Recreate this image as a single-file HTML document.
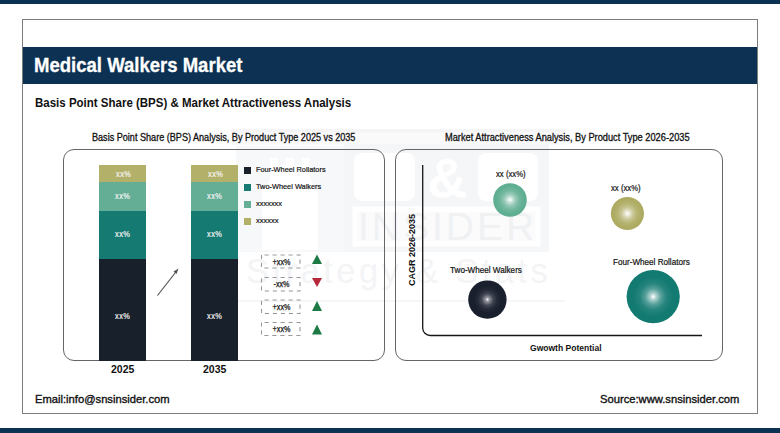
<!DOCTYPE html>
<html><head><meta charset="utf-8">
<style>
*{margin:0;padding:0;box-sizing:border-box}
html,body{width:780px;height:433px;overflow:hidden;background:#fff;font-family:"Liberation Sans",sans-serif;position:relative}
.a{position:absolute}
.t{position:absolute;white-space:nowrap;line-height:1;transform-origin:0 0}
#topbar{left:0;top:0;width:780px;height:4px;background:#0c3152}
#botbar{left:0;top:428px;width:780px;height:5px;background:#0c3152}
#frame{left:22px;top:19px;width:736px;height:395px;border:1px solid #7c7c7c}
#header{left:23px;top:47px;width:734px;height:37px;background:#0c3152}
.box{position:absolute;border:1.3px solid #666;border-radius:10px}
#lbox{left:63px;top:148.5px;width:322px;height:212.5px;border-radius:11px}
#rbox{left:395px;top:148.5px;width:328px;height:212.5px;border-radius:11px}
.seg{position:absolute;width:47px}
.bl{position:absolute;color:#f4f4f4;font-size:8.8px;letter-spacing:0.5px;text-indent:0.5px;-webkit-text-stroke:0.2px #f4f4f4;transform:scaleX(0.84);line-height:1;white-space:nowrap;text-align:center;width:47px}
.leg{position:absolute;width:7px;height:7px}
.lt{position:absolute;font-size:8.1px;color:#111;-webkit-text-stroke:0.2px #111;white-space:nowrap;line-height:1;transform-origin:0 0}
.db{position:absolute;width:39px;height:14px;border:1px dashed #9a9a9a}
.dbt{position:absolute;font-size:8.4px;color:#111;-webkit-text-stroke:0.25px #111;line-height:1;white-space:nowrap;width:39px;text-align:center;transform:scaleX(0.86)}
.bub{position:absolute;border-radius:50%}
</style></head><body>
<div id="topbar" class="a"></div>
<div id="botbar" class="a"></div>
<div id="frame" class="a"></div>
<div id="header" class="a"></div>
<!-- watermark -->
<svg class="a" style="left:0;top:0" width="780" height="433">
<rect x="231" y="129" width="334" height="16" fill="#fafafb"/><rect x="231" y="129" width="334" height="3.5" fill="#f5f5f7"/>
<rect x="236" y="146" width="108" height="106" fill="#f7f8f9"/>
<path d="M262 250 L262 190 L270 180 L270 158 L278 158 L278 165 L286 165 L286 158 L294 158 L294 165 L302 165 L302 158 L310 158 L310 180 L318 190 L318 250 Z" fill="#fff"/>
<rect x="344" y="144" width="205" height="108" fill="#f5f6f8"/>
<rect x="354" y="153" width="61" height="48" rx="8" fill="#fff"/>
<rect x="478" y="153" width="60" height="48" rx="8" fill="#fff"/>
<rect x="355" y="209" width="183" height="35" fill="#fbfbfc" stroke="#fff" stroke-width="5"/>
</svg>
<div class="t" style="left:427px;top:150px;font-size:56px;font-weight:bold;color:#fff">&amp;</div>
<div class="t" style="left:358px;top:207px;font-size:39px;color:#f0f1f3;letter-spacing:3px">INSIDER</div>
<div id="wm3" class="t" style="left:246px;top:254px;font-size:34.5px;color:#f3f4f6;letter-spacing:3.5px">Strategy &amp; Stats</div>
<svg class="a" style="left:0;top:0" width="780" height="433"><rect x="236" y="300" width="329" height="2" fill="#f5f6f8"/></svg>
<div id="title" class="t" style="left:34.2px;top:55.3px;font-size:20.6px;font-weight:bold;color:#fff;-webkit-text-stroke:0.3px #fff;transform:scaleX(0.9)">Medical Walkers Market</div>
<div id="sub" class="t" style="left:35px;top:97px;font-size:12.5px;font-weight:bold;color:#111;transform:scaleX(0.92)">Basis Point Share (BPS) &amp; Market Attractiveness Analysis</div>
<div id="lt" class="t" style="left:91.8px;top:133px;font-size:10.1px;color:#111;-webkit-text-stroke:0.3px #111;transform:scaleX(0.9)">Basis Point Share (BPS) Analysis, By Product Type 2025 vs 2035</div>
<div id="rt" class="t" style="left:444.8px;top:133px;font-size:10px;color:#111;-webkit-text-stroke:0.3px #111;transform:scaleX(0.925)">Market Attractiveness Analysis, By Product Type 2026-2035</div>

<div id="lbox" class="box"></div>
<div id="rbox" class="box"></div>

<!-- bars -->
<div class="seg" style="left:99px;top:165px;height:17px;background:#b3b069"></div>
<div class="seg" style="left:99px;top:182px;height:28.5px;background:#63ae94"></div>
<div class="seg" style="left:99px;top:210.5px;height:48px;background:#157a72"></div>
<div class="seg" style="left:99px;top:258.5px;height:102px;background:#18202c"></div>
<div class="seg" style="left:191px;top:165px;height:17px;background:#b3b069"></div>
<div class="seg" style="left:191px;top:182px;height:28.5px;background:#63ae94"></div>
<div class="seg" style="left:191px;top:210.5px;height:48px;background:#157a72"></div>
<div class="seg" style="left:191px;top:258.5px;height:102px;background:#18202c"></div>

<div class="bl" style="left:99.5px;top:169.5px">xx%</div>
<div class="bl" style="left:99px;top:192px">xx%</div>
<div class="bl" style="left:99px;top:230px">xx%</div>
<div class="bl" style="left:99px;top:312px">xx%</div>
<div class="bl" style="left:192px;top:169.5px">xx%</div>
<div class="bl" style="left:191px;top:192px">xx%</div>
<div class="bl" style="left:191px;top:230px">xx%</div>
<div class="bl" style="left:191px;top:312px">xx%</div>

<div id="y1" class="t" style="left:111px;top:364px;font-size:10.5px;font-weight:bold;color:#111">2025</div>
<div id="y2" class="t" style="left:203px;top:364px;font-size:10.5px;font-weight:bold;color:#111">2035</div>

<!-- arrow -->
<svg class="a" style="left:0;top:0" width="780" height="433">
<line x1="157.5" y1="295.5" x2="177" y2="270.5" stroke="#555" stroke-width="1.2"/>
<polygon points="178.5,268.5 173.5,271.5 176.5,274" fill="#555"/>
</svg>

<!-- legend -->
<div class="leg" style="left:244px;top:167px;background:#18202c"></div>
<div class="leg" style="left:244px;top:184px;background:#157a72"></div>
<div class="leg" style="left:244px;top:201px;background:#63ae94"></div>
<div class="leg" style="left:244px;top:218px;background:#b3b069"></div>
<div class="lt" style="left:256px;top:166px;transform:scaleX(0.91)">Four-Wheel Rollators</div>
<div class="lt" style="left:256px;top:183px;transform:scaleX(0.91)">Two-Wheel Walkers</div>
<div class="lt" style="left:256px;top:200px;transform:scaleX(0.92)">xxxxxxx</div>
<div class="lt" style="left:256px;top:217px;transform:scaleX(0.93)">xxxxxx</div>

<!-- dashed boxes -->
<svg class="a" style="left:0;top:0" width="780" height="433">
<g fill="none" stroke="#9a9a9a" stroke-width="1.1" stroke-dasharray="4.2 3.8" stroke-dashoffset="-3">
<rect x="261.5" y="255" width="38.5" height="13"/>
<rect x="261.5" y="277.5" width="38.5" height="13.5"/>
<rect x="261.5" y="300" width="38.5" height="13.5"/>
<rect x="261.5" y="322.5" width="38.5" height="13"/>
</g></svg>
<div class="dbt" style="left:262.3px;top:257.8px">+xx%</div>
<div class="dbt" style="left:262.3px;top:280.3px">-xx%</div>
<div class="dbt" style="left:262.3px;top:302.8px">+xx%</div>
<div class="dbt" style="left:262.3px;top:325.3px">+xx%</div>
<svg class="a" style="left:0;top:0" width="780" height="433">
<polygon points="317,254.5 322,264 312,264" fill="#1d7a45"/>
<polygon points="312,278 322,278 317,287" fill="#b5283a"/>
<polygon points="317,301 322,311 312,311" fill="#1d7a45"/>
<polygon points="317,324.5 322,334.5 312,334.5" fill="#1d7a45"/>
</svg>

<!-- right chart -->
<svg class="a" style="left:0;top:0" width="780" height="433">
<path d="M422.7 165 L422.7 328 A7.5 7.5 0 0 0 430.2 335.5 L702 335.5" fill="none" stroke="#151515" stroke-width="1.3"/>
<defs>
<radialGradient id="g1"><stop offset="0" stop-color="#5fae92" stop-opacity="0"/><stop offset="0.15" stop-color="#5fae92" stop-opacity="0.3"/><stop offset="0.35" stop-color="#5fae92" stop-opacity="0.66"/><stop offset="0.6" stop-color="#5fae92" stop-opacity="0.9"/><stop offset="0.85" stop-color="#5fae92"/></radialGradient>
<radialGradient id="g2"><stop offset="0" stop-color="#aeab62" stop-opacity="0"/><stop offset="0.15" stop-color="#aeab62" stop-opacity="0.3"/><stop offset="0.35" stop-color="#aeab62" stop-opacity="0.66"/><stop offset="0.6" stop-color="#aeab62" stop-opacity="0.9"/><stop offset="0.85" stop-color="#aeab62"/></radialGradient>
<radialGradient id="g3"><stop offset="0" stop-color="#1a1f2e" stop-opacity="0"/><stop offset="0.1" stop-color="#1a1f2e" stop-opacity="0.45"/><stop offset="0.3" stop-color="#1a1f2e" stop-opacity="0.82"/><stop offset="0.5" stop-color="#1a1f2e" stop-opacity="0.95"/><stop offset="0.72" stop-color="#1a1f2e"/></radialGradient>
<radialGradient id="g4"><stop offset="0" stop-color="#137a72" stop-opacity="0"/><stop offset="0.12" stop-color="#137a72" stop-opacity="0.35"/><stop offset="0.3" stop-color="#137a72" stop-opacity="0.72"/><stop offset="0.5" stop-color="#137a72" stop-opacity="0.92"/><stop offset="0.75" stop-color="#137a72"/></radialGradient>
</defs>
<circle cx="510" cy="200" r="16.8" fill="url(#g1)"/>
<circle cx="627.4" cy="213.5" r="16.6" fill="url(#g2)"/>
<circle cx="487.4" cy="299.6" r="19.2" fill="url(#g3)"/>
<circle cx="653.2" cy="296.6" r="26.6" fill="url(#g4)"/>
</svg>
<div class="lt" style="left:496px;top:169.5px;font-size:8.8px;transform:scaleX(0.88)">xx (xx%)</div>
<div class="lt" style="left:611px;top:183.5px;font-size:8.8px;transform:scaleX(0.88)">xx (xx%)</div>
<div class="lt" style="left:450.3px;top:265.5px;font-size:8.6px;transform:scaleX(0.945)">Two-Wheel Walkers</div>
<div class="lt" style="left:612.8px;top:258px;font-size:8.6px;transform:scaleX(0.945)">Four-Wheel Rollators</div>
<div id="gp" class="t" style="left:529.8px;top:342.8px;font-size:9.4px;font-weight:bold;color:#111;transform:scaleX(0.91)">Gwowth Potential</div>
<div id="cagr" class="t" style="left:407.2px;top:285.8px;font-size:9.5px;font-weight:bold;color:#111;transform:rotate(-90deg) scaleX(0.947)">CAGR 2026-2035</div>

<div id="email" class="t" style="left:35px;top:394.3px;font-size:11px;color:#111;-webkit-text-stroke:0.35px #111;transform:scaleX(1.018)">Email:info@snsinsider.com</div>
<div id="src" class="t" style="left:599.7px;top:394.3px;font-size:11px;color:#111;-webkit-text-stroke:0.35px #111;transform:scaleX(1.018)">Source:www.snsinsider.com</div>
</body></html>
